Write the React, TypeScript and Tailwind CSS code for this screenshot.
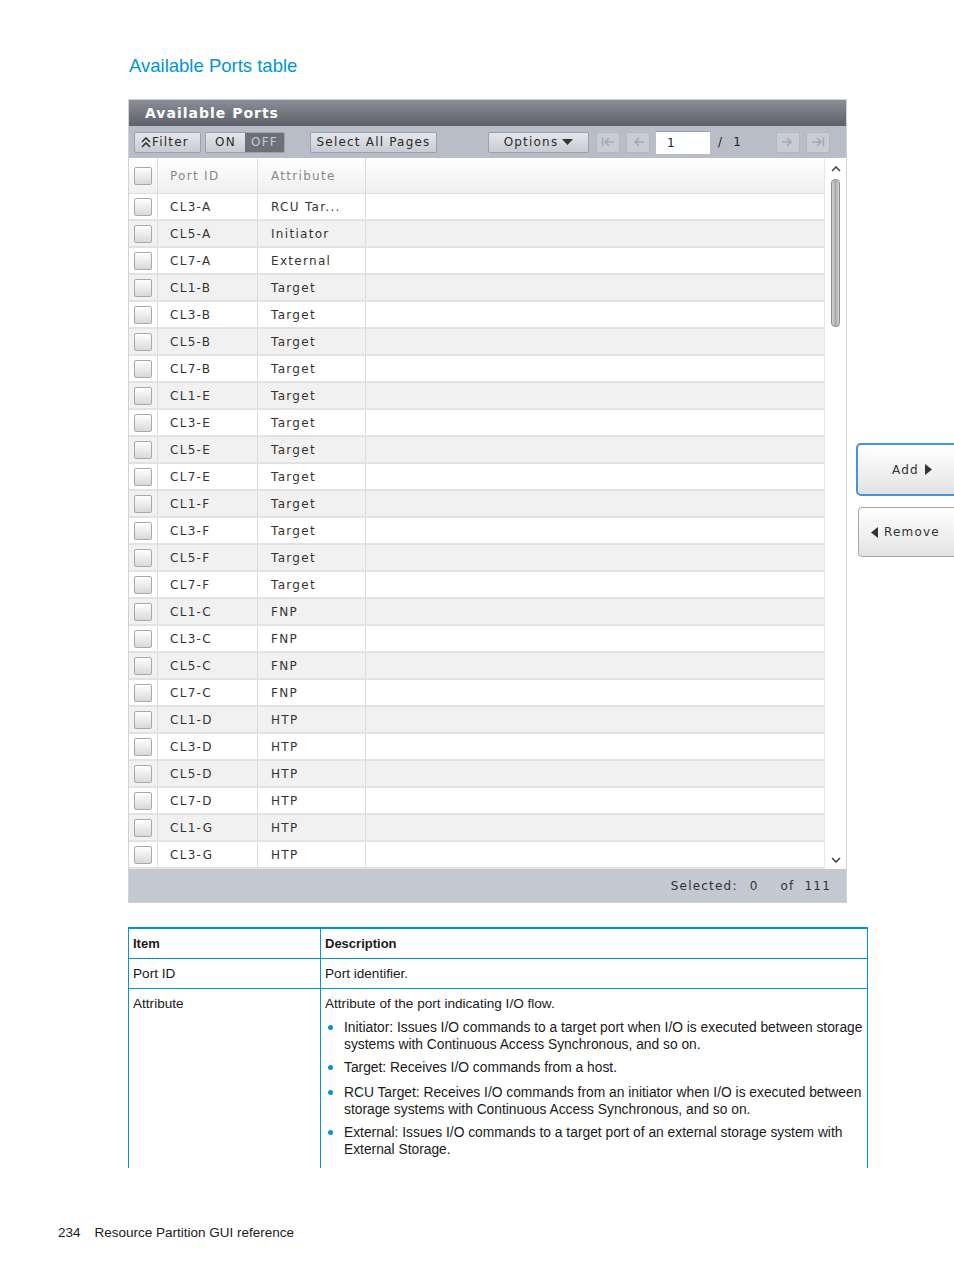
import React from 'react';

const ports: [string, string][] = [
  ['CL3-A', 'RCU Tar...'],
  ['CL5-A', 'Initiator'],
  ['CL7-A', 'External'],
  ['CL1-B', 'Target'],
  ['CL3-B', 'Target'],
  ['CL5-B', 'Target'],
  ['CL7-B', 'Target'],
  ['CL1-E', 'Target'],
  ['CL3-E', 'Target'],
  ['CL5-E', 'Target'],
  ['CL7-E', 'Target'],
  ['CL1-F', 'Target'],
  ['CL3-F', 'Target'],
  ['CL5-F', 'Target'],
  ['CL7-F', 'Target'],
  ['CL1-C', 'FNP'],
  ['CL3-C', 'FNP'],
  ['CL5-C', 'FNP'],
  ['CL7-C', 'FNP'],
  ['CL1-D', 'HTP'],
  ['CL3-D', 'HTP'],
  ['CL5-D', 'HTP'],
  ['CL7-D', 'HTP'],
  ['CL1-G', 'HTP'],
  ['CL3-G', 'HTP'],
];

const gui = { fontFamily: '"DejaVu Sans", Verdana, sans-serif' };
const doc = { fontFamily: '"Liberation Sans", Arial, sans-serif' };

const toolBtn =
  'h-[21px] flex items-center border border-[#9ca0aa] rounded-[2px] bg-linear-to-b from-[#e4e6eb] to-[#c8cbd3] text-[12px] tracking-[1.2px] text-[#2a2a2a]';

function Checkbox() {
  return <div className="w-[18px] h-[18px] rounded-[2px] border border-[#a9a9a9] bg-linear-to-b from-white to-[#d9d9d9]" />;
}

function PageArrow({ dir, bar }: { dir: 'left' | 'right'; bar?: boolean }) {
  const flip = dir === 'left';
  return (
    <div className="w-[24px] h-[21px] flex items-center justify-center border border-[#b3b7c0] rounded-[2px] bg-[#c9ccd4]">
      <svg width="14" height="12" viewBox="0 0 14 12" style={{ transform: flip ? 'scaleX(-1)' : undefined }}>
        <path d="M1 6h9M6 2l4 4-4 4" stroke="#a4a8b1" strokeWidth="1.6" fill="none" />
        {bar && <path d="M12.5 1.5v9" stroke="#a4a8b1" strokeWidth="1.6" />}
      </svg>
    </div>
  );
}

function PortsPanel() {
  return (
    <div className="w-[719px] h-[804px] border border-[#cfd2d8] flex flex-col" style={gui}>
      {/* title bar */}
      <div className="h-[26px] bg-linear-to-b from-[#8b8e97] to-[#5e616a] flex items-center pl-[16px] pt-[1px]">
        <span className="text-white font-bold text-[14px] tracking-[1px]">Available Ports</span>
      </div>
      {/* toolbar */}
      <div className="h-[32px] bg-[#b9bdc7] flex items-center">
        <div className={`${toolBtn} ml-[5px] w-[67px] px-[6px]`}>
          <svg width="10" height="11" viewBox="0 0 10 11" className="mr-[1px]">
            <path d="M1 5l4-4 4 4M1 10l4-4 4 4" stroke="#333" strokeWidth="1.6" fill="none" />
          </svg>
          Filter
        </div>
        <div className="ml-[4px] h-[21px] w-[80px] flex border border-[#9ca0aa] rounded-[2px] overflow-hidden text-[12px] tracking-[1.2px]">
          <div className="w-[40px] flex items-center justify-center bg-linear-to-b from-[#e4e6eb] to-[#c8cbd3] text-[#2a2a2a]">ON</div>
          <div className="w-[40px] flex items-center justify-center bg-[#6d7079] text-[#c5c9d1]">OFF</div>
        </div>
        <div className={`${toolBtn} ml-[25px] w-[127px] justify-center`}>Select All Pages</div>
        <div className={`${toolBtn} ml-[51px] w-[101px] justify-center gap-[4px]`}>
          Options
          <svg width="11" height="7" viewBox="0 0 11 7">
            <path d="M0 0h11L5.5 6z" fill="#333" />
          </svg>
        </div>
        <div className="ml-[7px]">
          <PageArrow dir="left" bar />
        </div>
        <div className="ml-[6px]">
          <PageArrow dir="left" />
        </div>
        <div className="ml-[6px] w-[54px] h-[23px] bg-white border-t border-[#9a9ea8] flex items-center pl-[11px] text-[12px] text-[#222]">1</div>
        <div className="ml-[8px] w-[58px] text-[12px] text-[#222] tracking-[1.2px]">/&nbsp;&nbsp;1</div>
        <PageArrow dir="right" />
        <div className="ml-[6px]">
          <PageArrow dir="right" bar />
        </div>
      </div>
      {/* table */}
      <div className="h-[711px] flex bg-white">
        <div className="w-[695px] flex flex-col">
          <div className="h-[36px] flex bg-linear-to-b from-white to-[#efefef] border-b border-[#dedede] text-[12px] tracking-[1.3px] text-[#8a8a8a]">
            <div className="w-[29px] flex items-center justify-center border-r border-[#dcdcdc]">
              <Checkbox />
            </div>
            <div className="w-[100px] flex items-center pl-[12px] border-r border-[#dcdcdc]">Port ID</div>
            <div className="w-[108px] flex items-center pl-[13px] border-r border-[#dcdcdc]">Attribute</div>
            <div className="flex-1" />
          </div>
          {ports.map(([id, attr], i) => (
            <div
              key={id}
              className={`h-[27px] flex border-b-2 border-[#e2e2e2] text-[12px] tracking-[1.3px] text-[#333] ${i % 2 ? 'bg-[#f1f1f1]' : 'bg-white'}`}
            >
              <div className="w-[29px] flex items-center justify-center border-r border-[#dcdcdc]">
                <Checkbox />
              </div>
              <div className="w-[100px] flex items-center pl-[12px] border-r border-[#dcdcdc]">{id}</div>
              <div className="w-[108px] flex items-center pl-[13px] border-r border-[#dcdcdc]">{attr}</div>
              <div className="flex-1" />
            </div>
          ))}
        </div>
        {/* scrollbar */}
        <div className="w-[22px] flex flex-col items-center border-l border-[#e6e6e6]">
          <svg width="10" height="6" viewBox="0 0 10 6" className="mt-[8px]">
            <path d="M1 5l4-4 4 4" stroke="#444" strokeWidth="1.6" fill="none" />
          </svg>
          <div className="mt-[7px] w-[9px] h-[148px] rounded-[4px] border border-[#8d8d8d] bg-linear-to-r from-[#d2d2d2] via-[#a9a9a9] to-[#d2d2d2]" />
          <div className="flex-1" />
          <svg width="10" height="6" viewBox="0 0 10 6" className="mb-[6px]">
            <path d="M1 1l4 4 4-4" stroke="#444" strokeWidth="1.6" fill="none" />
          </svg>
        </div>
      </div>
      {/* footer */}
      <div className="flex-1 bg-[#c4c8d2] flex items-center justify-end pr-[15px] text-[12px] tracking-[1.2px] text-[#333]">
        <span>Selected:</span>
        <span className="ml-[12px]">0</span>
        <span className="ml-[22px]">of</span>
        <span className="ml-[10px]">111</span>
      </div>
    </div>
  );
}

function SideButtons() {
  return (
    <div className="flex flex-col pt-[344px]" style={gui}>
      <div className="ml-[9px] w-[110px] h-[53px] rounded-[5px] border-2 border-[#4c8fdc] bg-linear-to-b from-white to-[#e3e3e3] flex items-center pl-[34px] gap-[6px] text-[12px] tracking-[1.2px] text-[#333]">
        Add
        <svg width="7" height="11" viewBox="0 0 7 11">
          <path d="M0 0l7 5.5L0 11z" fill="#333" />
        </svg>
      </div>
      <div className="ml-[11px] mt-[11px] w-[110px] h-[50px] rounded-[4px] border border-[#a8a8a8] bg-linear-to-b from-white to-[#e3e3e3] flex items-center pl-[12px] gap-[6px] text-[12px] tracking-[1.2px] text-[#333]">
        <svg width="7" height="11" viewBox="0 0 7 11">
          <path d="M7 0L0 5.5 7 11z" fill="#333" />
        </svg>
        Remove
      </div>
    </div>
  );
}

function Bullet({ lines, mt }: { lines: string[]; mt: string }) {
  return (
    <div className={`flex ${mt}`}>
      <div className="w-[19px] flex justify-start pl-[3px] pt-[6px]">
        <div className="w-[5px] h-[5px] rounded-full bg-[#0096d6]" />
      </div>
      <div className="text-[13.8px]">
        {lines.map((l) => (
          <div key={l} className="whitespace-nowrap">{l}</div>
        ))}
      </div>
    </div>
  );
}

function DescriptionTable() {
  return (
    <div className="ml-[128px] mt-[24px] w-[740px] border-t-2 border-[#0096d6] text-[13.6px] leading-[17px] text-[#1a1a1a]" style={doc}>
      <div className="flex h-[30px] border-b border-[#0096d6]">
        <div className="w-[192px] border-l border-[#0096d6] flex items-center pl-[4px] font-bold text-[13px]">Item</div>
        <div className="flex-1 border-l border-r border-[#0096d6] flex items-center pl-[4px] font-bold text-[13px]">Description</div>
      </div>
      <div className="flex h-[30px] border-b border-[#0096d6]">
        <div className="w-[192px] border-l border-[#0096d6] flex items-center pl-[4px]">Port ID</div>
        <div className="flex-1 border-l border-r border-[#0096d6] flex items-center pl-[4px]">Port identifier.</div>
      </div>
      <div className="flex h-[179px]">
        <div className="w-[192px] border-l border-[#0096d6] pl-[4px] pt-[6px]">Attribute</div>
        <div className="flex-1 border-l border-r border-[#0096d6] pl-[4px] pt-[6px]">
          <div>Attribute of the port indicating I/O flow.</div>
          <Bullet
            mt="mt-[7px]"
            lines={[
              'Initiator: Issues I/O commands to a target port when I/O is executed between storage',
              'systems with Continuous Access Synchronous, and so on.',
            ]}
          />
          <Bullet mt="mt-[6px]" lines={['Target: Receives I/O commands from a host.']} />
          <Bullet
            mt="mt-[8px]"
            lines={[
              'RCU Target: Receives I/O commands from an initiator when I/O is executed between',
              'storage systems with Continuous Access Synchronous, and so on.',
            ]}
          />
          <Bullet
            mt="mt-[6px]"
            lines={[
              'External: Issues I/O commands to a target port of an external storage system with',
              'External Storage.',
            ]}
          />
        </div>
      </div>
    </div>
  );
}

export default function App() {
  return (
    <div className="w-[954px] h-[1271px] bg-white overflow-hidden flex flex-col">
      <div className="mt-[54px] ml-[129px] text-[18.5px] leading-[24px] text-[#0096d6]" style={doc}>
        Available Ports table
      </div>
      <div className="mt-[21px] ml-[128px] flex">
        <PortsPanel />
        <SideButtons />
      </div>
      <DescriptionTable />
      <div className="mt-[56px] ml-[58px] flex text-[13.5px] leading-[17px] text-[#1a1a1a]" style={doc}>
        <span>234</span>
        <span className="ml-[14px]">Resource Partition GUI reference</span>
      </div>
    </div>
  );
}
